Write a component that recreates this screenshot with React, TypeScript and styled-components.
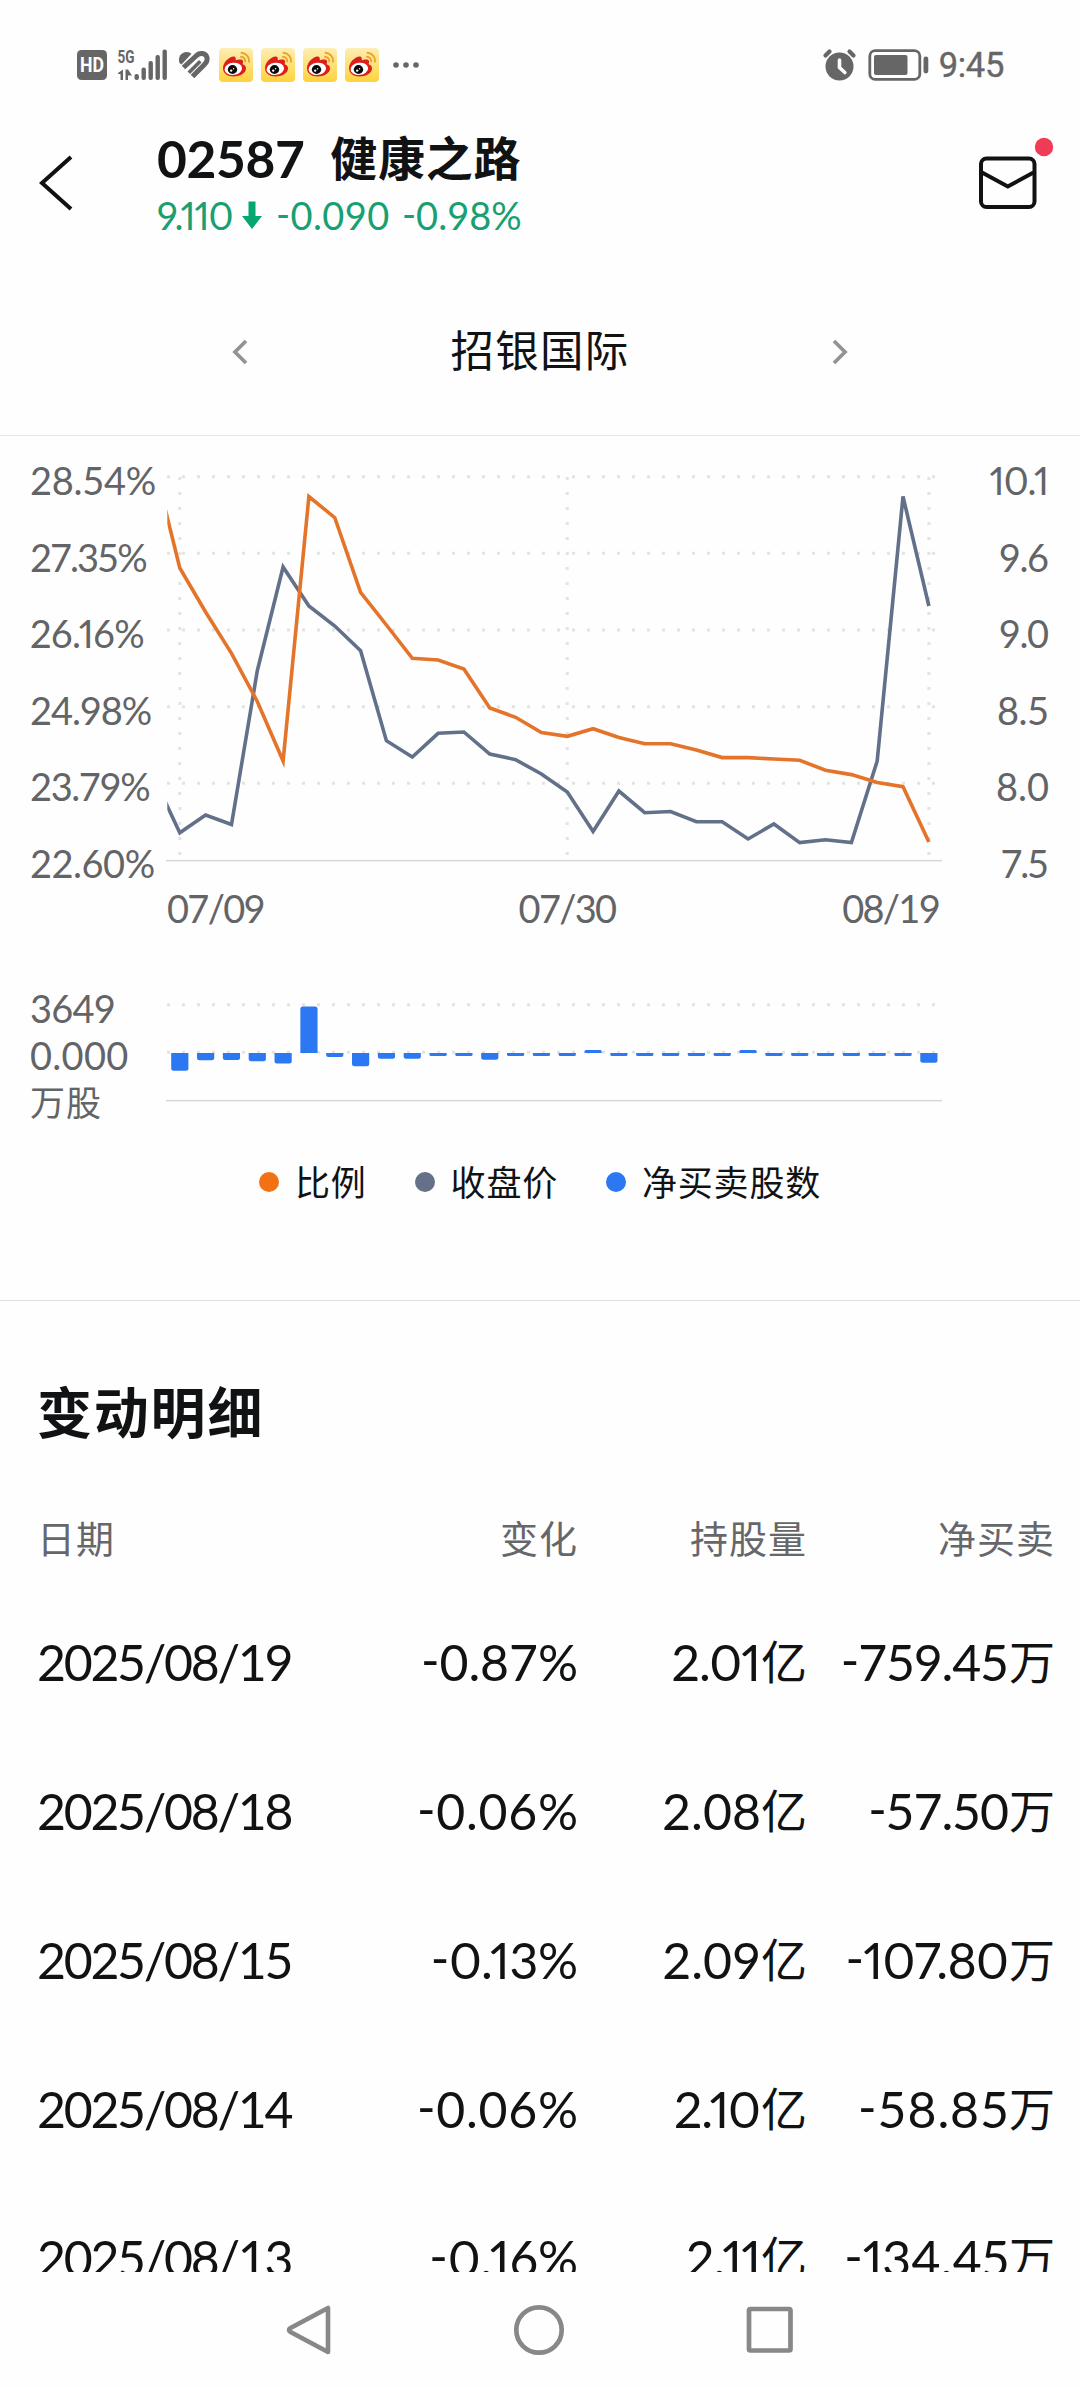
import React from "react";
import styled, { createGlobalStyle } from "styled-components";

const GlobalStyle = createGlobalStyle`
  * { box-sizing: border-box; }
  body {
    margin: 0;
    background: #fefefe;
    color: #101214;
    font-family: Lato, "Noto Sans CJK SC", sans-serif;
    font-feature-settings: "tnum", "case";
  }
`;

const Screen = styled.div`
  display: flex;
  flex-direction: column;
  width: 1080px;
  height: 2388px;
  overflow: hidden;
  background: #fefefe;
`;

/* A number set with tabular or proportional figures and its own tracking. */
const Figure = styled.span<{ $tracking?: number; $narrow?: boolean }>`
  letter-spacing: ${(p) => p.$tracking ?? 0}px;
  margin-right: ${(p) => -(p.$tracking ?? 0)}px;
  white-space: nowrap;
  font-feature-settings: ${(p) => (p.$narrow ? '"pnum", "case"' : '"tnum", "case"')};
`;

/* ---------- status bar ---------- */

const StatusBar = styled.div`
  flex: none;
  display: flex;
  align-items: center;
  height: 98px;
  padding: 31px 76px 0 77px;
  color: #666;
`;

const StatusIcon = styled.svg<{ $gap?: number }>`
  flex: none;
  display: block;
  overflow: visible;
  margin-right: ${(p) => p.$gap ?? 0}px;
`;

const StatusSpacer = styled.div`
  flex: 1;
`;

const Clock = styled.span`
  font-family: Roboto, sans-serif;
  font-size: 34.5px;
  line-height: 36px;
  letter-spacing: -0.3px;
  -webkit-text-stroke: 0.4px #666;
`;

const WeiboIcon = ({ gap }: { gap: number }) => (
  <StatusIcon $gap={gap} width="34" height="34" viewBox="0 0 34 34">
    <defs>
      <linearGradient id="weiboBg" x1="0" y1="0" x2="0" y2="1">
        <stop offset="0" stopColor="#fdeeb4" />
        <stop offset="1" stopColor="#fed23c" />
      </linearGradient>
    </defs>
    <rect width="34" height="34" rx="4" fill="url(#weiboBg)" />
    <path d="M4 20C4 14 11 8 15 8.5C17.5 9 16.5 12 17 12.3C19 11.500 23 10.500 24 13C24.500 14.500 23 16 24 16.500C26 17 27 18.500 27 20.500C27 25 21 28.500 14.500 28.500C8.500 28.500 4 25.500 4 20Z" fill="#dc1f1c" />
    <ellipse cx="14.300" cy="20.800" rx="8.800" ry="6.100" fill="#fff" transform="rotate(-6 14.300 20.800)" />
    <ellipse cx="13.500" cy="21.500" rx="4.700" ry="4.400" fill="#090909" />
    <circle cx="12.200" cy="22.600" r="1.200" fill="#fff" />
    <circle cx="14.600" cy="20.800" r="0.700" fill="#fff" />
    <g fill="none" stroke="#efa02c" strokeWidth="1.900" strokeLinecap="round">
      <path d="M22.500 4.800A8 8 0 0 1 30 13.700" />
      <path d="M22 8.800A4.300 4.300 0 0 1 26.200 13.200" />
    </g>
  </StatusIcon>
);

/* ---------- header ---------- */

const Header = styled.header`
  flex: none;
  display: flex;
  align-items: flex-start;
  height: 170px;
  padding: 31px 25px 0 37px;
`;

const BackButton = styled.div`
  width: 120px;
  padding-top: 24px;
  svg { display: block; }
`;

const StockInfo = styled.div`
  flex: 1;
`;

const StockTitle = styled.h1`
  display: flex;
  gap: 26px;
  margin: 0;
  font-size: 51.5px;
  line-height: 58px;
  font-weight: 700;
  letter-spacing: -0.4px;
`;

const StockName = styled.span`
  font-size: 47px;
  letter-spacing: 0.7px;
`;

const StockQuote = styled.div`
  display: flex;
  align-items: center;
  height: 56px;
  font-size: 38px;
  line-height: 56px;
  color: #189f72;
`;

const QuoteSlot = styled.span<{ $width: number }>`
  flex: none;
  width: ${(p) => p.$width}px;
`;

const DownArrow = styled.svg`
  flex: none;
  margin-right: 14px;
`;

const MailButton = styled.div`
  padding-top: 6px;
  svg { display: block; }
`;

/* ---------- broker switcher ---------- */

const BrokerBar = styled.div`
  flex: none;
  display: flex;
  align-items: center;
  justify-content: space-between;
  height: 168px;
  padding: 0 230px;
  border-bottom: 1px solid #e7e7e8;
`;

const BrokerName = styled.span`
  padding-bottom: 3px;
  font-size: 43.5px;
  line-height: 60px;
  letter-spacing: 1.300px;
`;

/* ---------- chart ---------- */

const ChartSection = styled.section`
  flex: none;
  height: 865px;
  padding-top: 24px;
  border-bottom: 1px solid #dfe0e1;
  color: #636467;
  font-size: 38px;
`;

const PlotRow = styled.div<{ $height: number }>`
  display: grid;
  grid-template-columns: 166px 776px 1fr;
  height: ${(p) => p.$height}px;
  svg { display: block; }
`;

const AxisLabels = styled.div<{ $align: "flex-start" | "flex-end"; $line: number }>`
  display: flex;
  flex-direction: column;
  justify-content: space-between;
  align-items: ${(p) => p.$align};
  padding: 0 31px 0 30px;
  line-height: ${(p) => p.$line}px;
  white-space: nowrap;
`;

const UnitLabel = styled.span`
  font-size: 35px;
  letter-spacing: 1px;
`;

const DateAxis = styled.div`
  display: grid;
  grid-template-columns: 280px 242px 1fr;
  width: 776px;
  margin: 4px 0 56px 166px;
  line-height: 41px;
  letter-spacing: -1.7px;
  span:nth-child(1) { padding-left: 1px; }
  span:nth-child(2) { text-align: center; }
  span:nth-child(3) { text-align: right; padding-right: 3px; }
`;

const Legend = styled.div`
  display: flex;
  justify-content: center;
  gap: 48px;
  margin-top: 31px;
`;

const LegendItem = styled.div<{ $color: string }>`
  display: flex;
  align-items: center;
  gap: 16px;
  font-size: 35px;
  line-height: 50px;
  letter-spacing: 0.8px;
  color: #101214;
  &::before {
    content: "";
    width: 20px;
    height: 20px;
    border-radius: 50%;
    background: ${(p) => p.$color};
  }
`;

const STEP = 25.83;
const FIRST_X = 13.8;
const pointX = (i: number) => FIRST_X + i * STEP;

// Vertical positions inside the plot; the first sample lies left of the visible window.
const ratio = [
  3.5, 108, 152, 193.3, 241.5, 301, 36.500, 57.7, 132.3, 165, 198.3, 200, 209, 248, 257.300, 272.5, 276.3,
  268.7, 277.5, 283.700, 283.7, 290, 297.6, 297.6, 299, 300.3, 310.3, 314.6, 322.5, 326.7, 382,
];
const price = [
  318, 372.7, 355, 364.5, 210.7, 107, 146, 166, 190.7, 280.7, 297, 273.3, 272, 294, 299.7, 314, 332,
  371.5, 331, 352.7, 351.5, 361.7, 361.7, 379, 364, 382.6, 379.7, 382.6, 301, 36.500, 146,
];
const netShares = [
  -17.7, -7.3, -7, -8.3, -10.6, 46.6, -4, -13.3, -5.7, -5.7, -3, -3, -6.7, -3, -3, -3, 3, -3, -3, -3, -3,
  -3, 3, -3, -3, -3, -3, -3, -3, -9.7,
];

const linePoints = (ys: number[]) => ys.map((y, i) => `${pointX(i - 1).toFixed(1)},${y}`).join(" ");

const barPath = (x: number, zero: number, v: number) => {
  const h = Math.abs(v);
  const r = Math.min(2.5, h / 2);
  const s = v < 0 ? 1 : -1;
  const end = zero + s * h;
  const l = x - 8.6;
  const t = x + 8.6;
  return `M${l} ${zero}H${t}V${end - s * r}Q${t} ${end} ${t - r} ${end}H${l + r}Q${l} ${end} ${l} ${end - s * r}Z`;
};

const GRID = "#e3e3e4";

const LineChart = () => (
  <svg width="776" height="424" viewBox="0 0 776 424">
    <defs>
      <clipPath id="plotWindow">
        <rect x="1.300" y="0" width="775" height="424" />
      </clipPath>
    </defs>
    <g stroke={GRID} strokeWidth="3" strokeDasharray="3 12">
      {[16.7, 93.3, 170, 246.7, 323.3].map((y) => (
        <line key={y} x1="1" x2="770" y1={y} y2={y} />
      ))}
      {[0, 15, 29].map((i) => (
        <line key={i} x1={pointX(i)} x2={pointX(i)} y1="17" y2="398" />
      ))}
    </g>
    <rect x="0" y="400" width="776" height="1.300" fill="#d3d4d6" />
    <g fill="none" strokeWidth="3.600" clipPath="url(#plotWindow)">
      <polyline points={linePoints(price)} stroke="#63708a" />
      <polyline points={linePoints(ratio)} stroke="#e3742a" />
    </g>
  </svg>
);

const BarChart = () => (
  <svg width="776" height="141" viewBox="0 0 776 141">
    <g stroke={GRID} strokeWidth="3" strokeDasharray="3 12">
      <line x1="1" x2="770" y1="19.700" y2="19.700" />
      <line x1="1" x2="770" y1="67.300" y2="67.300" />
    </g>
    <rect x="0" y="115" width="776" height="1.300" fill="#d3d4d6" />
    {netShares.map((v, i) => (
      <path key={i} d={barPath(pointX(i), 68, v)} fill="#2c78f2" />
    ))}
  </svg>
);

/* ---------- detail table ---------- */

const Details = styled.section`
  flex: 1;
  min-height: 0;
  overflow: hidden;
`;

const DetailsTitle = styled.h2`
  height: 189px;
  margin: 0;
  padding: 71px 0 0 37px;
  font-size: 55px;
  line-height: 80px;
  font-weight: 700;
  letter-spacing: 1.800px;
`;

const Row = styled.div<{ $head?: boolean }>`
  display: grid;
  grid-template-columns: 300px 241px 229px 248px;
  align-items: center;
  height: ${(p) => (p.$head ? 98 : 149)}px;
  padding: 0 0 2px 37px;
  color: ${(p) => (p.$head ? "#66676a" : "#101214")};
  font-size: ${(p) => (p.$head ? 38 : 50)}px;
  letter-spacing: ${(p) => (p.$head ? 1 : 0)}px;
  line-height: 60px;
  white-space: nowrap;
`;

const Cell = styled.span<{ $left?: boolean }>`
  text-align: ${(p) => (p.$left ? "left" : "right")};
`;

const Unit = styled.span`
  font-size: 46px;
  line-height: 1;
  vertical-align: 2px;
`;

type Value = [text: string, tracking: number, narrow?: boolean];

const rows: { date: string; change: Value; held: Value; net: Value }[] = [
  { date: "2025/08/19", change: ["-0.87%", -0.1], held: ["2.01", -1, true], net: ["-759.45", -1.2] },
  { date: "2025/08/18", change: ["-0.06%", 0.7], held: ["2.08", 0.1], net: ["-57.50", -1.1] },
  { date: "2025/08/15", change: ["-0.13%", -0.4, true], held: ["2.09", 0], net: ["-107.80", -0.7, true] },
  { date: "2025/08/14", change: ["-0.06%", 0.7], held: ["2.10", -1.2, true], net: ["-58.85", 0.9] },
  { date: "2025/08/13", change: ["-0.16%", 0, true], held: ["2.11", -0.8, true], net: ["-134.45", -0.2, true] },
];

const Num = ({ value: [text, tracking, narrow] }: { value: Value }) => (
  <Figure $tracking={tracking} $narrow={narrow}>{text}</Figure>
);

/* ---------- system navigation ---------- */

const NavBar = styled.nav`
  flex: none;
  display: flex;
  align-items: center;
  justify-content: space-between;
  height: 116px;
  padding: 0 286px;
`;

const leftAxis: Value[] = [
  ["28.54%", -0.3],
  ["27.35%", -2],
  ["26.16%", -0.5, true],
  ["24.98%", -1.1],
  ["23.79%", -1.4],
  ["22.60%", -0.5],
];
const rightAxis: Value[] = [
  ["10.1", -0.8, true],
  ["9.6", -1.4],
  ["9.0", -1.4],
  ["8.5", -0.5],
  ["8.0", 0],
  ["7.5", -2.3],
];

export default function App() {
  return (
    <Screen>
      <GlobalStyle />
      <StatusBar>
        <StatusIcon $gap={10} width="30" height="30" viewBox="0 0 30 30">
          <rect width="30" height="30" rx="4.500" fill="#666" />
          <text x="3" y="22" fontFamily="Roboto" fontWeight="700" fontSize="19.500" textLength="24" lengthAdjust="spacingAndGlyphs" fill="#fff">HD</text>
        </StatusIcon>
        <StatusIcon $gap={10} width="51" height="32" viewBox="0 0 51 32" fill="#666">
          <text x="0.500" y="14" fontFamily="Roboto" fontWeight="700" fontSize="18" textLength="17" lengthAdjust="spacingAndGlyphs">5G</text>
          <path d="M1 24L6 20.500V31H3.500V25H1ZM8.500 20.500H11L15 26.500H11V31H8.500Z" />
          <rect x="17.500" y="25" width="4.400" height="6" rx="2" />
          <rect x="24.500" y="18.500" width="4.400" height="12.500" rx="2" />
          <rect x="31.500" y="12" width="4.400" height="19" rx="2" />
          <rect x="38.500" y="6" width="4.400" height="25" rx="2" />
          <rect x="45.500" y="0.500" width="4.400" height="30.500" rx="2" />
        </StatusIcon>
        <StatusIcon $gap={9} width="32" height="28" viewBox="0 0 32 28" fill="none" stroke="#666" strokeLinecap="butt">
          <path d="M1.500 12C-1 5 5 -1 11.500 1.500L13.500 2.700L3.500 13.500Z" fill="#666" stroke="none" />
          <path d="M5.500 16.500L18 5C22 0.500 28 2.500 29 6.500C29.800 9.500 28 12 26 14L14.500 25.500" strokeWidth="5" />
          <path d="M10.800 21.800L22.300 10.300" strokeWidth="3.600" />
        </StatusIcon>
        <WeiboIcon gap={8} />
        <WeiboIcon gap={8} />
        <WeiboIcon gap={8} />
        <WeiboIcon gap={14} />
        <StatusIcon width="26" height="6" viewBox="0 0 26 6" fill="#666">
          <circle cx="3" cy="3" r="2.800" />
          <circle cx="13" cy="3" r="2.800" />
          <circle cx="23" cy="3" r="2.800" />
        </StatusIcon>
        <StatusSpacer />
        <StatusIcon $gap={12} width="33" height="32" viewBox="0 0 33 32">
          <circle cx="16.500" cy="17.500" r="14" fill="#666" />
          <path d="M2.500 6.500L6.500 2.500M30.500 6.500L26.500 2.500" stroke="#666" strokeWidth="4.200" strokeLinecap="round" />
          <path d="M16.500 11V18.500L21.800 23.500" fill="none" stroke="#fefefe" strokeWidth="3.600" strokeLinecap="round" />
        </StatusIcon>
        <StatusIcon $gap={10} width="61" height="32" viewBox="0 0 61 32">
          <rect x="1.800" y="1.600" width="50" height="28.800" rx="5.500" fill="none" stroke="#666" strokeWidth="2.800" />
          <rect x="6" y="6" width="33.500" height="20" rx="2" fill="#666" />
          <rect x="55.500" y="7.500" width="4.800" height="17" rx="2.400" fill="#666" />
        </StatusIcon>
        <Clock>9:45</Clock>
      </StatusBar>

      <Header>
        <BackButton>
          <svg width="38" height="60" viewBox="0 0 38 60">
            <path d="M34 4L5 30L34 56" fill="none" stroke="#101214" strokeWidth="4" />
          </svg>
        </BackButton>
        <StockInfo>
          <StockTitle>
            <span>02587</span>
            <StockName>健康之路</StockName>
          </StockTitle>
          <StockQuote>
            <QuoteSlot $width={85}><Figure $narrow $tracking={-1.1}>9.110</Figure></QuoteSlot>
            <DownArrow width="20" height="28" viewBox="0 0 20 28">
              <path d="M6.500 0.500H13.500V15H20L10 28L0 15H6.500Z" fill="#05a770" />
            </DownArrow>
            <QuoteSlot $width={126}><Figure $tracking={0.4}>-0.090</Figure></QuoteSlot>
            <QuoteSlot $width={121}><Figure>-0.98%</Figure></QuoteSlot>
          </StockQuote>
        </StockInfo>
        <MailButton>
          <svg width="80" height="80" viewBox="0 0 80 80">
            <rect x="6" y="23.500" width="53.500" height="48.500" rx="5.500" fill="none" stroke="#101214" strokeWidth="4" />
            <path d="M7 37.500L32.800 51.500L58.500 37.500" fill="none" stroke="#101214" strokeWidth="4" strokeLinejoin="round" />
            <circle cx="69" cy="12" r="9.200" fill="#ef3b55" />
          </svg>
        </MailButton>
      </Header>

      <BrokerBar>
        <svg width="20" height="28" viewBox="0 0 20 28">
          <path d="M16 3L5 14L16 25" fill="none" stroke="#949494" strokeWidth="3.800" />
        </svg>
        <BrokerName>招银国际</BrokerName>
        <svg width="20" height="28" viewBox="0 0 20 28">
          <path d="M4 3L15 14L4 25" fill="none" stroke="#949494" strokeWidth="3.800" />
        </svg>
      </BrokerBar>

      <ChartSection>
        <PlotRow $height={424}>
          <AxisLabels $align="flex-start" $line={41}>
            {leftAxis.map((v) => <Num key={v[0]} value={v} />)}
          </AxisLabels>
          <LineChart />
          <AxisLabels $align="flex-end" $line={41}>
            {rightAxis.map((v) => <Num key={v[0]} value={v} />)}
          </AxisLabels>
        </PlotRow>
        <DateAxis>
          <span>07/09</span>
          <span>07/30</span>
          <span>08/19</span>
        </DateAxis>
        <PlotRow $height={141}>
          <AxisLabels $align="flex-start" $line={47}>
            <Figure $tracking={-0.8}>3649</Figure>
            <Figure $tracking={0.3}>0.000</Figure>
            <UnitLabel>万股</UnitLabel>
          </AxisLabels>
          <BarChart />
        </PlotRow>
        <Legend>
          <LegendItem $color="#f37115">比例</LegendItem>
          <LegendItem $color="#647189">收盘价</LegendItem>
          <LegendItem $color="#2c78f2">净买卖股数</LegendItem>
        </Legend>
      </ChartSection>

      <Details>
        <DetailsTitle>变动明细</DetailsTitle>
        <Row $head>
          <Cell $left>日期</Cell>
          <Cell>变化</Cell>
          <Cell>持股量</Cell>
          <Cell>净买卖</Cell>
        </Row>
        {rows.map(({ date, change, held, net }) => (
          <Row key={date}>
            <Cell $left><Figure $tracking={-2.3}>{date}</Figure></Cell>
            <Cell><Num value={change} /></Cell>
            <Cell><Num value={held} /><Unit>亿</Unit></Cell>
            <Cell><Num value={net} /><Unit>万</Unit></Cell>
          </Row>
        ))}
      </Details>

      <NavBar>
        <svg width="46" height="52" viewBox="0 0 46 52">
          <path d="M42 4V48L4.500 28Q1.500 26 4.500 24Z" fill="none" stroke="#888" strokeWidth="4.600" strokeLinejoin="round" />
        </svg>
        <svg width="52" height="52" viewBox="0 0 52 52">
          <circle cx="26" cy="26" r="22.700" fill="none" stroke="#888" strokeWidth="4.700" />
        </svg>
        <svg width="48" height="48" viewBox="0 0 48 48">
          <rect x="3" y="3" width="41.500" height="41.500" rx="1.500" fill="none" stroke="#888" strokeWidth="4.700" />
        </svg>
      </NavBar>
    </Screen>
  );
}
